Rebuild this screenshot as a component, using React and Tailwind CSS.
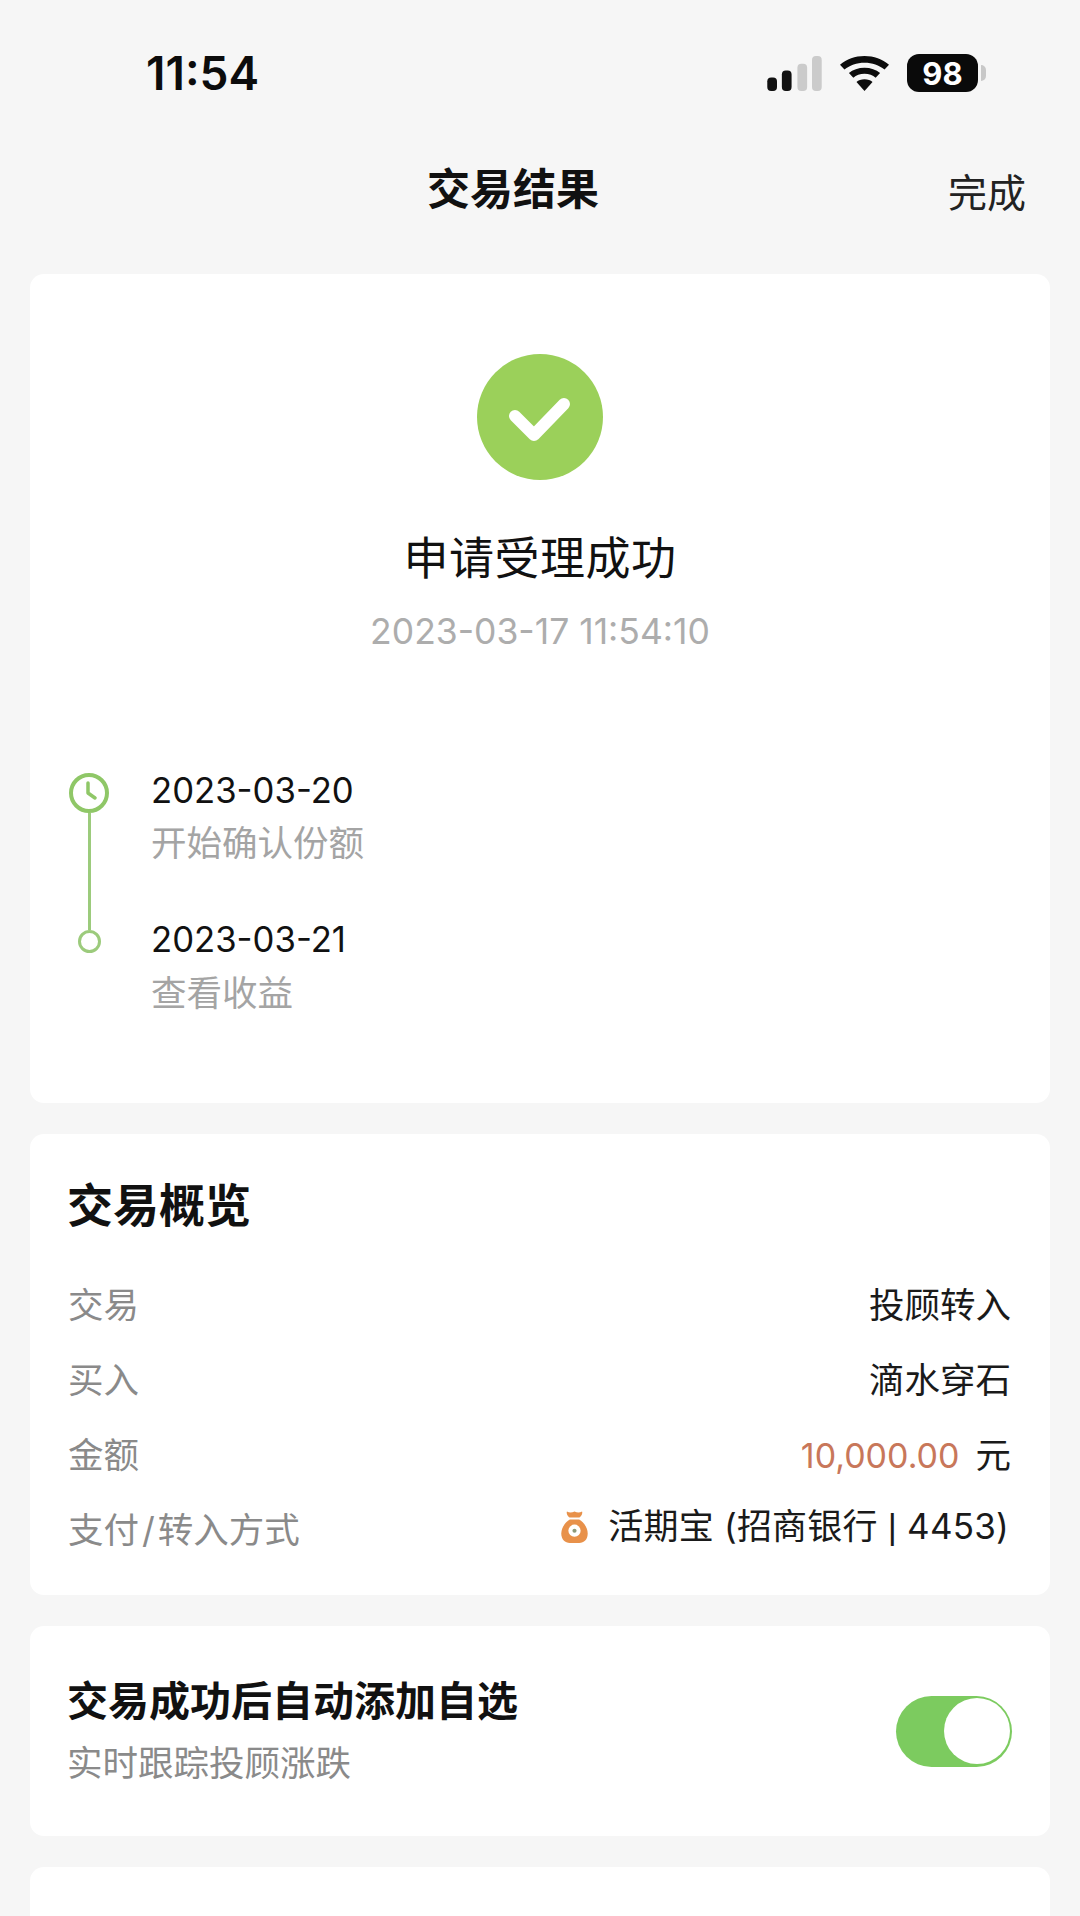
import React from "react";

const FONT = "[font-family:'Inter','Noto_Sans_CJK_SC',sans-serif]";

const StatusBar = () => (
  <div className="flex h-[108px] items-start justify-between pl-[146px] pr-[94px] pt-[46px]">
    <span className="text-[46px] leading-[54px] font-semibold text-[#0c0c0c]">11:54</span>
    <div className="flex items-center gap-[18px] pt-[8px]">
      <svg width="55" height="35" viewBox="0 0 56 36">
        <rect x="0" y="22" width="10" height="14" rx="4" fill="#111" />
        <rect x="15" y="15" width="10" height="21" rx="4" fill="#111" />
        <rect x="31" y="8" width="10" height="28" rx="4" fill="#cbcbcb" />
        <rect x="46" y="0" width="10" height="36" rx="4" fill="#cbcbcb" />
      </svg>
      <svg width="49" height="35" viewBox="0 0 44 36" preserveAspectRatio="none">
        <path d="M22 0C13.500 0 6 3.400 0 9l4 5C9 9.500 15 7 22 7s13 2.500 18 7l4-5C38 3.400 30.500 0 22 0z" fill="#0c0c0c" />
        <path d="M22 12c-5.500 0-10.500 2-14 5.500l4 4.800c2.500-2.500 6-4 10-4s7.500 1.500 10 4l4-4.800C32.500 14 27.500 12 22 12z" fill="#0c0c0c" />
        <path d="M22 24c-3 0-5.500 1-7.200 2.800L22 36l7.200-9.200C27.500 25 25 24 22 24z" fill="#0c0c0c" />
      </svg>
      <div className="flex items-center gap-[3px]">
        <div className="flex h-[38px] w-[71px] items-center justify-center rounded-[12px] bg-[#0a0a0a] text-[31px] leading-none font-bold text-white">
          98
        </div>
        <div className="h-[16px] w-[5px] rounded-r-full bg-[#c8c8c8]" />
      </div>
    </div>
  </div>
);

const NavBar = () => (
  <div className="relative flex h-[166px] items-start justify-center pr-[54px] pt-[56px]">
    <span className="text-[43px] leading-[50px] font-bold text-[#111]">交易结果</span>
    <span className="absolute right-[54px] top-[60px] text-[39px] leading-[50px] text-[#222]">完成</span>
  </div>
);

const Timeline = () => (
  <div className="flex pl-[39px]">
    <div className="flex w-[40px] flex-col items-center pt-[3px]">
      <svg width="40" height="40" viewBox="0 0 40 40">
        <circle cx="20" cy="20" r="18" fill="#fff" stroke="#8fc767" strokeWidth="4" />
        <path d="M19 10v10l7 5" fill="none" stroke="#8fc767" strokeWidth="3.500" strokeLinecap="round" strokeLinejoin="round" />
      </svg>
      <div className="h-[117px] w-[3px] bg-[#9ccb7c]" />
      <div className="h-[23px] w-[23px] rounded-full border-[3px] border-[#9ccb7c]" />
    </div>
    <div className="ml-[42px] -mt-[1px] flex flex-col">
      <div className="text-[34.700px] leading-[42px] text-[#111]">2023-03-20</div>
      <div className="mt-[12px] text-[35.500px] leading-[42px] text-[#a4a4a4]">开始确认份额</div>
      <div className="mt-[53px] text-[34.700px] leading-[42px] text-[#111]">2023-03-21</div>
      <div className="mt-[13px] text-[35.500px] leading-[42px] text-[#a4a4a4]">查看收益</div>
    </div>
  </div>
);

const ResultCard = () => (
  <section className="mx-[30px] flex h-[829px] flex-col rounded-[14px] bg-white pt-[80px]">
    <div className="flex flex-col items-center">
      <svg width="126" height="126" viewBox="0 0 126 126">
        <circle cx="63" cy="63" r="63" fill="#9bd05a" />
        <path d="M38 62l19 19 30-31" fill="none" stroke="#fff" strokeWidth="12" strokeLinecap="round" strokeLinejoin="round" />
      </svg>
      <div className="mt-[53px] text-[45px] leading-[52px] tracking-[0.5px] text-[#111]">申请受理成功</div>
      <div className="mt-[26px] text-[35.500px] leading-[42px] text-[#adadad]">2023-03-17 11:54:10</div>
    </div>
    <div className="mt-[117px]">
      <Timeline />
    </div>
  </section>
);

const MoneyBag = () => (
  <svg width="27" height="33" viewBox="0 0 28 35">
    <path d="M6 1.500c2.500 1.500 5 1.500 8 0 3 1.500 5.500 1.500 8 0 1 2-1 5.500-3 6.500H9C7 7 5 3.500 6 1.500z" fill="#e8914a" />
    <path d="M9 10h10c5 3 9 9 9 15 0 6.500-4 10-9 10H9c-5 0-9-3.500-9-10 0-6 4-12 9-15z" fill="#e8914a" />
    <circle cx="14" cy="22" r="6.500" fill="#fff" />
    <circle cx="14" cy="22" r="2.200" fill="#8c9a7a" />
  </svg>
);

const Row = ({ label, children }) => (
  <div className="flex h-[75px] items-center justify-between">
    <span className="text-[35.500px] leading-[44px] text-[#8a8a8a]">{label}</span>
    <div className="flex items-center text-[35.500px] leading-[44px] text-[#1a1a1a]">{children}</div>
  </div>
);

const OverviewCard = () => (
  <section className="mx-[30px] mt-[31px] h-[461px] rounded-[14px] bg-white pl-[38px] pr-[39px] pt-[45px]">
    <h2 className="-ml-[1px] text-[46px] leading-[52px] font-bold text-[#111]">交易概览</h2>
    <div className="mt-[37px]">
      <Row label="交易">投顾转入</Row>
      <Row label="买入">滴水穿石</Row>
      <Row label="金额">
        <span className="text-[34px] text-[#c8775a]">10,000.00</span>
        <span className="ml-[16px]">元</span>
      </Row>
      <Row
        label={
          <>
            支付<span className="mx-[3px]">/</span>转入方式
          </>
        }
      >
        <div className="mb-[8px] flex items-center">
          <MoneyBag />
          <span className="ml-[20px] mr-[2px] text-[35px] tracking-[0.2px]">
            活期宝 (招商银行 <span className="[font-family:'Liberation_Sans']">|</span> 4453)
          </span>
        </div>
      </Row>
    </div>
  </section>
);

const AutoAddCard = () => (
  <section className="mx-[30px] mt-[31px] flex h-[210px] items-center justify-between rounded-[14px] bg-white pl-[37px] pr-[38px]">
    <div>
      <div className="text-[41px] leading-[48px] font-bold text-[#111]">交易成功后自动添加自选</div>
      <div className="mt-[18px] text-[35.500px] leading-[42px] text-[#8a8a8a]">实时跟踪投顾涨跌</div>
    </div>
    <div className="flex h-[71px] w-[116px] items-center justify-end rounded-full bg-[#7ccb5f] pr-[2px]">
      <div className="h-[66px] w-[66px] rounded-full bg-white" />
    </div>
  </section>
);

export default function App() {
  return (
    <div className={`h-[1916px] w-[1080px] overflow-hidden bg-[#f6f6f6] ${FONT}`}>
      <StatusBar />
      <NavBar />
      <ResultCard />
      <OverviewCard />
      <AutoAddCard />
      <section className="mx-[30px] mt-[31px] h-[80px] rounded-t-[14px] bg-white" />
    </div>
  );
}
